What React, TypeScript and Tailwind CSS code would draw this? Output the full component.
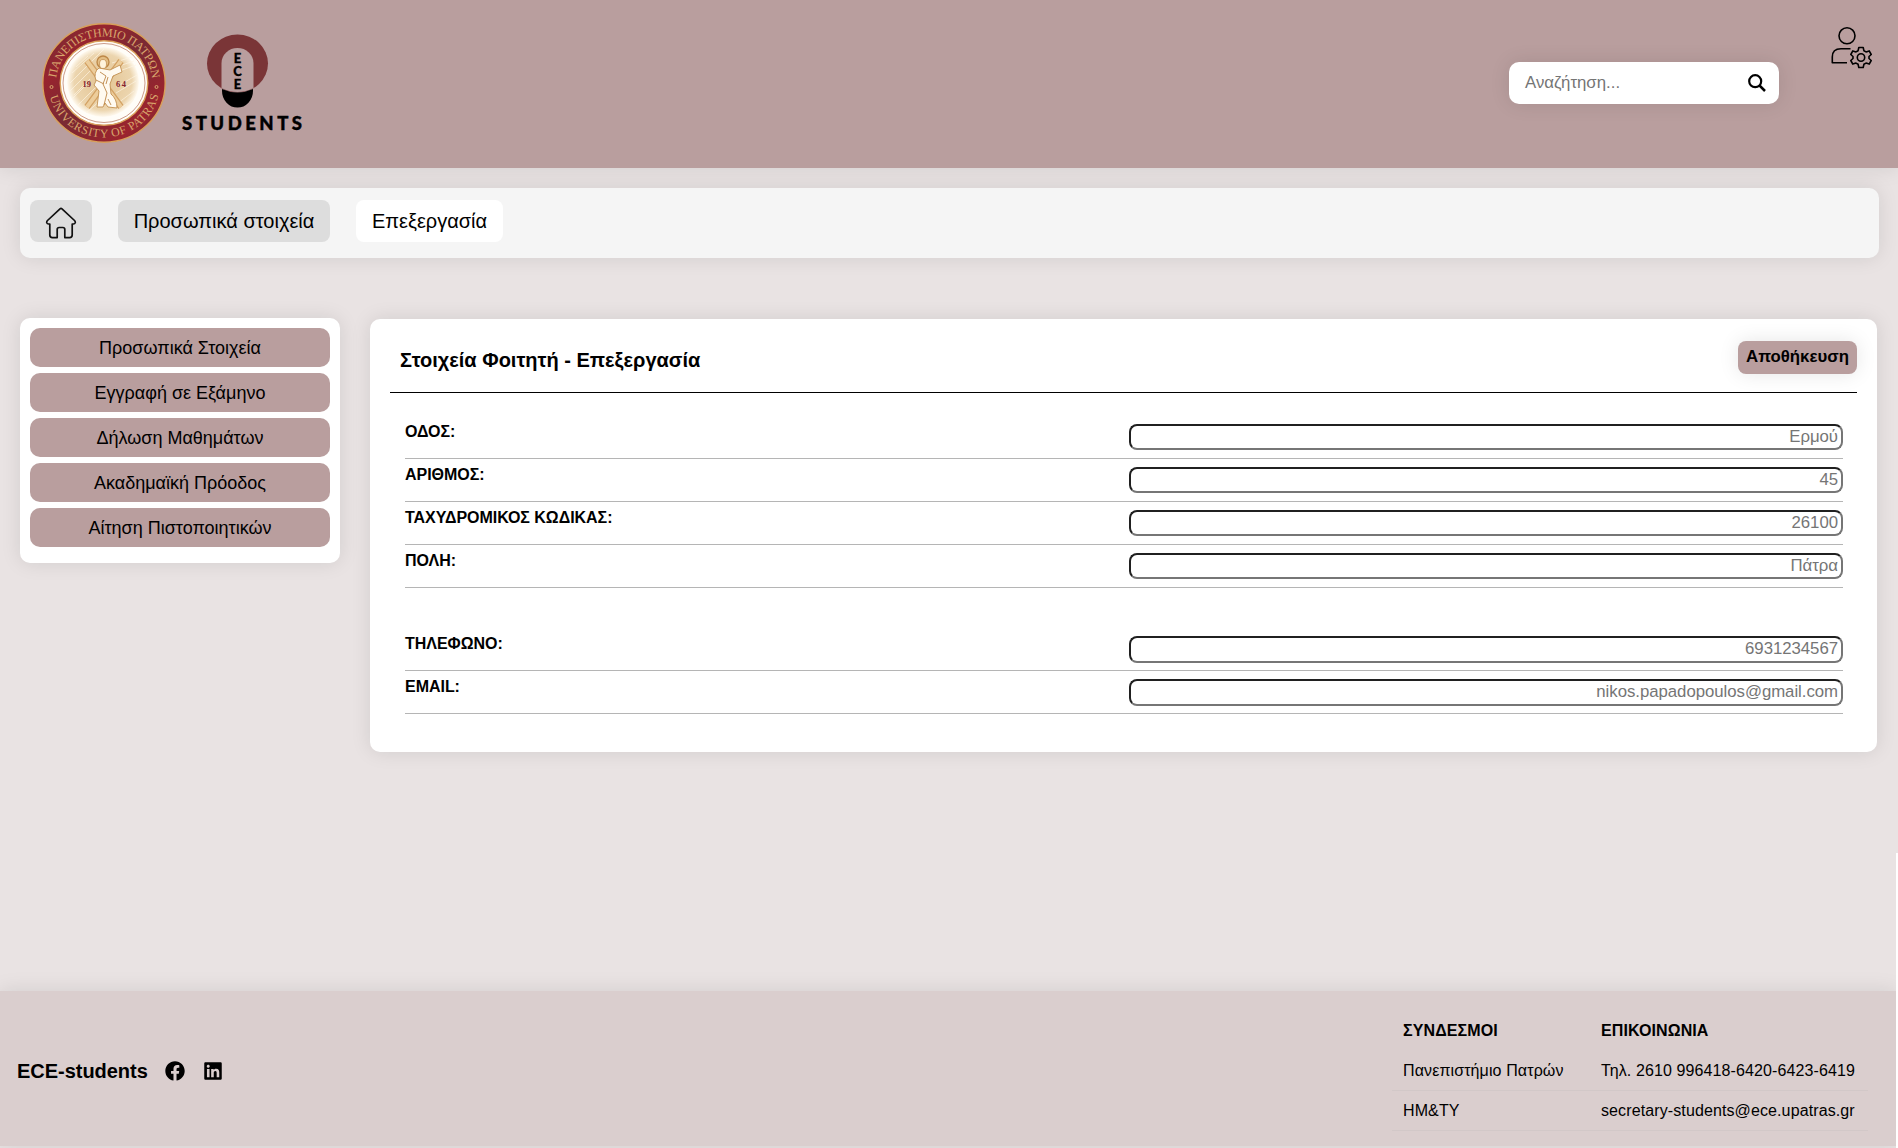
import React from "react";
import { FaFacebook, FaLinkedin } from "react-icons/fa";

function Seal() {
  return (
    <svg width="124" height="120" viewBox="0 0 124 120" className="block shrink-0" preserveAspectRatio="none">
      <defs>
        <linearGradient id="ring" x1="0" y1="0" x2="1" y2="1">
          <stop offset="0.1" stopColor="#7c2a32" />
          <stop offset="0.25" stopColor="#98242e" />
          <stop offset="0.5" stopColor="#7a2a33" />
          <stop offset="0.8" stopColor="#9c242e" />
          <stop offset="0.95" stopColor="#6e3038" />
        </linearGradient>
        <radialGradient id="glow">
          <stop offset="0" stopColor="#e3c391" />
          <stop offset="0.8" stopColor="#ecd5ae" />
          <stop offset="1" stopColor="#fffaf0" />
        </radialGradient>
        <path id="arcTop" d="M 14 60 A 48 46.5 0 0 1 110 60" />
        <path id="arcBottom" d="M 6 60 A 56 54.5 0 0 0 118 60" />
      </defs>
      <ellipse cx="62" cy="60" rx="61.200" ry="59.200" fill="url(#ring)" stroke="#d9a05a" strokeWidth="1.4" />
      <ellipse cx="62" cy="60" rx="43.800" ry="42.300" fill="#fffdf8" stroke="#d9a05a" strokeWidth="1.4" />
      <ellipse cx="62" cy="60" rx="41" ry="39.500" fill="none" stroke="#b5715c" strokeWidth="0.7" />
      <ellipse cx="61" cy="59" rx="36" ry="35" fill="url(#glow)" />
      <path
        d="M30 50L52 30M28 60L62 26M28 68L50 46M30 76L46 60M36 82L58 60M70 40L90 34M72 50L94 42M74 70L94 58M76 80L92 68M44 90L60 76M34 44L46 33M32 72L48 56M74 44L92 38M74 64L95 52M80 84L92 76"
        stroke="#fff6e6"
        strokeWidth="0.8"
        opacity="0.8"
      />
      <path d="M45 38L79 84M79 38L45 84" stroke="#d3a163" strokeWidth="6.500" />
      <path d="M45 38L79 84M79 38L45 84" stroke="#edcd9b" strokeWidth="4" />
      <path
        d="M57 45Q51 49 54 58L52 62L57 68L55 84H61L63 80L66 84L75 85Q75 76 69 71L68 61L71 53L80 49L78 42L68 47Z"
        fill="#fffaf0"
        stroke="#c29050"
        strokeWidth="0.9"
      />
      <circle cx="61" cy="39" r="6" fill="#e3bd83" stroke="#bd8747" strokeWidth="1.300" />
      <ellipse cx="61" cy="41" rx="3.500" ry="4.500" fill="#fff3dc" stroke="#bd8747" strokeWidth="0.700" />
      <path d="M58 49L64 53L61 61L65 70L62 82M66 54L64 61M54 57L62 61M66 76L69 82" fill="none" stroke="#bd8747" strokeWidth="0.9" />
      <g fill="#84242f" fontFamily="Liberation Serif, serif" fontWeight="700" fontSize="8.500">
        <text x="40.500" y="63.500">19</text>
        <text x="74" y="63.500" textLength="10">64</text>
      </g>
      <g fill="#d8a56c" fontFamily="Liberation Serif, serif" fontSize="12">
        <text><textPath href="#arcTop" startOffset="5" textLength="139">ΠΑΝΕΠΙΣΤΗΜΙΟ ΠΑΤΡΩΝ</textPath></text>
        <text><textPath href="#arcBottom" startOffset="14" textLength="147">UNIVERSITY OF PATRAS</textPath></text>
      </g>
      <g fill="none" stroke="#d8a56c" strokeWidth="1">
        <circle cx="9.500" cy="64" r="1.500" />
        <circle cx="114.500" cy="64" r="1.500" />
      </g>
    </svg>
  );
}

function StudentsLogo() {
  return (
    <svg width="124" height="100" viewBox="0 0 124 100" className="block shrink-0">
      <ellipse cx="57.500" cy="29.500" rx="30.500" ry="29" fill="#7a3537" />
      <path d="M41.500 30V29a16 15 0 0 1 32 0V54a34 34 0 0 1-32 0Z" fill="#b99e9e" />
      <path d="M42 55q15.500 7 31 0v2a15.500 16.500 0 0 1-31 0Z" fill="#000" />
      <g fill="#000" stroke="#000" strokeWidth="0.300" fontFamily="Lato, sans-serif" fontWeight="900" fontSize="13" textAnchor="middle">
        <text x="57.500" y="28.500">E</text>
        <text x="57.500" y="42">C</text>
        <text x="57.500" y="55">E</text>
      </g>
      <text x="2" y="95.500" fontFamily="Lato, sans-serif" fontWeight="900" fontSize="18.500" textLength="120" fill="#000" stroke="#000" strokeWidth="0.400">
        STUDENTS
      </text>
    </svg>
  );
}

function UserGear() {
  return (
    <svg width="42" height="44" viewBox="0 0 42 44" fill="none" stroke="#000" strokeWidth="1.600" strokeLinejoin="round" className="block">
      <circle cx="17" cy="9.800" r="8" />
      <path d="M20.500 22.800H11Q2.300 22.800 2.300 31V36.800H17" />
      <g transform="translate(31 31.500)">
        <circle r="3.700" />
        <path d="M-2.200-10H2.200L2.900-6.800L5-5.600L8.200-6.600L10.200-3L8-1V1L10.200 3L8.200 6.600L5 5.600L2.900 6.800L2.200 10H-2.200L-2.900 6.800L-5 5.600L-8.200 6.600L-10.200 3L-8 1V-1L-10.200-3L-8.200-6.600L-5-5.600L-2.900-6.800Z" />
      </g>
    </svg>
  );
}

function Magnifier() {
  return (
    <svg width="18" height="18" viewBox="0 0 18 18" fill="none" stroke="#000" strokeWidth="2.200" className="block">
      <circle cx="7.200" cy="7.200" r="6" />
      <path d="M11.500 11.500L17 17" strokeWidth="2.500" />
    </svg>
  );
}

function House() {
  return (
    <svg width="32" height="32" viewBox="0 0 32 32" fill="none" stroke="#111" strokeWidth="1.700" strokeLinejoin="round" className="block">
      <path d="M15 1.800Q16 1 17 1.800L29.500 13.500Q30.500 14.500 30.200 15.800Q29.800 17 28.500 17H27.200V28Q27.200 30.600 24.600 30.600H19.800V22.500Q19.800 20.500 17.800 20.500H14.200Q12.200 20.500 12.200 22.500V30.600H7.400Q4.800 30.600 4.800 28V17H3.500Q2.200 17 1.800 15.800Q1.500 14.500 2.500 13.500Z" />
    </svg>
  );
}

const menu = ["Προσωπικά Στοιχεία", "Εγγραφή σε Εξάμηνο", "Δήλωση Μαθημάτων", "Ακαδημαϊκή Πρόοδος", "Αίτηση Πιστοποιητικών"];
const address = [
  ["ΟΔΟΣ:", "Ερμού"],
  ["ΑΡΙΘΜΟΣ:", "45"],
  ["ΤΑΧΥΔΡΟΜΙΚΟΣ ΚΩΔΙΚΑΣ:", "26100"],
  ["ΠΟΛΗ:", "Πάτρα"],
];
const contact = [
  ["ΤΗΛΕΦΩΝΟ:", "6931234567"],
  ["EMAIL:", "nikos.papadopoulos@gmail.com"],
];

function Field({ label, value, tall }: { label: string; value: string; tall?: boolean }) {
  return (
    <div className="flex h-[43px] items-start justify-between border-b border-[#b5b5b5]">
      <label className="pt-[7px] text-base leading-[18px] font-bold tracking-[-0.03px]">{label}</label>
      <input
        placeholder={value}
        className={`mt-2 w-[714px] rounded-lg border-2 border-t-[#202020] border-r-[#767676] border-b-[#767676] border-l-[#202020] bg-white px-[3px] pb-px text-right text-[16.8px] leading-5 tracking-[-0.04px] placeholder:text-[#757575] ${tall ? "h-[27px]" : "h-[26px]"}`}
      />
    </div>
  );
}

export default function App() {
  return (
    <div className="relative flex h-[1148px] w-[1898px] flex-col overflow-hidden bg-[#e9e3e3] font-['Liberation_Sans',Arial,sans-serif] text-black">
      <header className="flex h-[168px] shrink-0 items-start bg-[#b99e9e] shadow-[0_0_20px_rgba(0,0,0,0.1)]">
        <div className="mt-[23px] ml-[42px]">
          <Seal />
        </div>
        <div className="mt-[34px] ml-[14px]">
          <StudentsLogo />
        </div>
        <div className="mt-[62px] ml-auto flex h-[42px] w-[270px] items-center justify-between rounded-[10px] bg-white pr-[13px] pl-4 shadow-[0_0_20px_rgba(0,0,0,0.1)]">
          <span className="text-[16.8px] text-[#757575]">Αναζήτηση...</span>
          <Magnifier />
        </div>
        <div className="mt-[26px] mr-[26px] ml-[51px]">
          <UserGear />
        </div>
      </header>

      <nav className="mt-5 mr-[19px] ml-5 flex h-[70px] shrink-0 gap-[26px] rounded-[10px] bg-[#f5f5f5] pt-3 pl-2.5 text-xl shadow-[0_0_20px_rgba(0,0,0,0.1)]">
        <a className="flex h-[42px] w-[62px] justify-center rounded-lg bg-[#dddddd] pt-[7px]">
          <House />
        </a>
        <a className="flex h-[42px] w-[212px] items-center justify-center rounded-lg bg-[#dddddd]">Προσωπικά στοιχεία</a>
        <a className="flex h-[42px] w-[147px] items-center justify-center rounded-lg bg-white">Επεξεργασία</a>
      </nav>

      <div className="mt-[60px] flex flex-1 items-start">
        <aside className="ml-5 flex h-[245px] w-[320px] flex-col gap-1.5 rounded-[10px] bg-white p-2.5 shadow-[0_0_20px_rgba(0,0,0,0.1)]">
          {menu.map((m) => (
            <a key={m} className="flex h-[39px] items-center justify-center rounded-[10px] bg-[#b99e9e] text-lg">
              {m}
            </a>
          ))}
        </aside>
        <main className="mt-px ml-[30px] h-[433px] w-[1507px] rounded-[10px] bg-white px-5 shadow-[0_0_20px_rgba(0,0,0,0.1)]">
          <div className="flex h-[74px] items-start justify-between border-b border-black pt-[22px] pl-2.5">
            <h1 className="pt-2 text-xl leading-[23px] font-bold">Στοιχεία Φοιτητή - Επεξεργασία</h1>
            <button className="h-[33px] w-[119px] rounded-lg bg-[#b99e9e] pb-px text-[16.8px] leading-5 font-bold whitespace-nowrap shadow-[0_0_20px_rgba(0,0,0,0.1)]">
              Αποθήκευση
            </button>
          </div>
          <div className="mr-[14px] ml-[15px] pt-[23px]">
            {address.map(([l, v]) => (
              <Field key={l} label={l} value={v} />
            ))}
            <div className="h-10" />
            {contact.map(([l, v]) => (
              <Field key={l} label={l} value={v} tall />
            ))}
          </div>
        </main>
      </div>

      <footer className="mr-0.5 mb-0.5 flex h-[155px] shrink-0 items-start bg-[#dacece] shadow-[0_0_20px_rgba(0,0,0,0.1)]">
        <div className="mt-[68px] ml-[17px] flex h-6 items-center">
          <span className="text-xl font-bold tracking-[-0.03px]">ECE-students</span>
          <FaFacebook size={20} className="ml-[17px]" />
          <FaLinkedin size={20} className="ml-[18px]" />
        </div>
        <div className="mt-5 mr-7 ml-auto grid w-[476px] grid-cols-[198px_278px] text-base tracking-[0.11px]">
          <b className="flex h-10 items-center pl-[11px]">ΣΥΝΔΕΣΜΟΙ</b>
          <b className="flex h-10 items-center pl-[11px]">ΕΠΙΚΟΙΝΩΝΙΑ</b>
          <span className="flex h-10 items-center border-b border-[#d2c8c8] pl-[11px]">Πανεπιστήμιο Πατρών</span>
          <span className="flex h-10 items-center border-b border-[#d2c8c8] pl-[11px]">Τηλ. 2610 996418-6420-6423-6419</span>
          <span className="flex h-10 items-center border-b border-[#d2c8c8] pl-[11px]">ΗΜ&amp;ΤΥ</span>
          <span className="flex h-10 items-center border-b border-[#d2c8c8] pl-[11px]">secretary-students@ece.upatras.gr</span>
        </div>
      </footer>
      <div className="absolute top-[853px] right-0 h-[295px] w-0.5 bg-white" />
    </div>
  );
}
